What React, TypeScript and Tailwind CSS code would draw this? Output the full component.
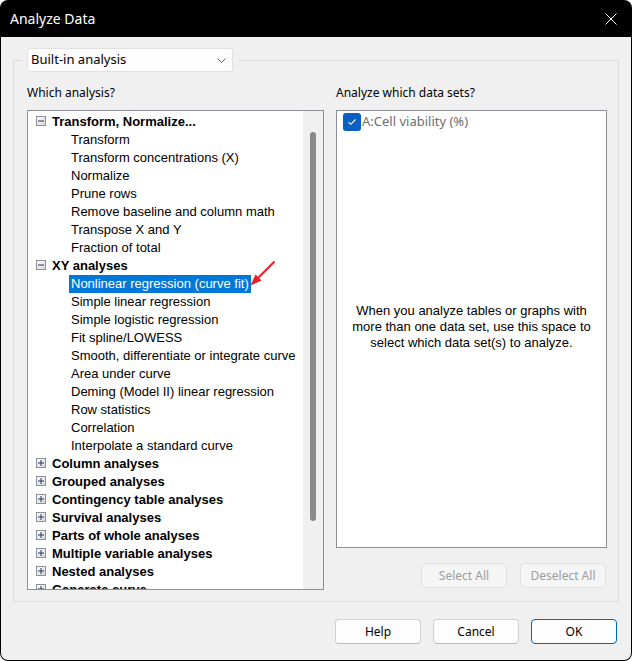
import React from "react";

type Cat = { label: string; open?: boolean; children?: string[] };

const tree: Cat[] = [
  {
    label: "Transform, Normalize...",
    open: true,
    children: [
      "Transform",
      "Transform concentrations (X)",
      "Normalize",
      "Prune rows",
      "Remove baseline and column math",
      "Transpose X and Y",
      "Fraction of total",
    ],
  },
  {
    label: "XY analyses",
    open: true,
    children: [
      "Nonlinear regression (curve fit)",
      "Simple linear regression",
      "Simple logistic regression",
      "Fit spline/LOWESS",
      "Smooth, differentiate or integrate curve",
      "Area under curve",
      "Deming (Model II) linear regression",
      "Row statistics",
      "Correlation",
      "Interpolate a standard curve",
    ],
  },
  { label: "Column analyses" },
  { label: "Grouped analyses" },
  { label: "Contingency table analyses" },
  { label: "Survival analyses" },
  { label: "Parts of whole analyses" },
  { label: "Multiple variable analyses" },
  { label: "Nested analyses" },
  { label: "Generate curve" },
];

function Toggle({ open }: { open?: boolean }) {
  return (
    <svg width="10" height="10" viewBox="0 0 10 10" className="shrink-0 mt-[3px]">
      <defs>
        <linearGradient id="tg" x1="0" y1="0" x2="1" y2="1">
          <stop offset="0" stopColor="#ffffff" />
          <stop offset="1" stopColor="#d6d6d6" />
        </linearGradient>
      </defs>
      <rect x="0.5" y="0.5" width="9" height="9" fill="url(#tg)" stroke="#8f8f8f" />
      <line x1="2" y1="5" x2="8" y2="5" stroke="#24376b" strokeWidth="1" />
      {!open && <line x1="5" y1="2" x2="5" y2="8" stroke="#24376b" strokeWidth="1" />}
    </svg>
  );
}

const tah = "font-['Liberation_Sans',Arial,sans-serif]";
const seg = "font-['Noto_Sans','Open_Sans',sans-serif]";

function Btn({ label, primary }: { label: string; primary?: boolean }) {
  return (
    <button
      className={`${seg} w-[86px] h-[25px] rounded-[4px] bg-[#fdfdfd] text-[12px] text-black border ${
        primary ? "border-[#0067c0]" : "border-[#d0d0d0] border-b-[#bcbcbc]"
      }`}
    >
      {label}
    </button>
  );
}

function DisBtn({ label }: { label: string }) {
  return (
    <button
      className={`${seg} w-[86px] h-[25px] rounded-[4px] bg-[#f5f5f5] text-[12px] text-[#9d9d9d] border border-[#e2e2e2]`}
    >
      {label}
    </button>
  );
}

export default function App() {
  return (
    <div className="w-[632px] h-[661px] bg-white">
      <div className="w-full h-full flex flex-col rounded-[8px] overflow-hidden bg-black">
        {/* Title bar */}
        <div className="h-[37px] shrink-0 flex items-center justify-between pl-[10px] pr-[15px]">
          <span className={`${seg} text-white text-[14px] leading-none`}>Analyze Data</span>
          <svg width="12" height="12" viewBox="0 0 12 12">
            <path d="M0.5 0.5 L11.5 11.5 M11.5 0.5 L0.5 11.5" stroke="#ffffff" strokeWidth="1" />
          </svg>
        </div>

        {/* Body */}
        <div className="flex-1 mx-px mb-px bg-[#f0f0f0] rounded-b-[7px] flex flex-col">
          <fieldset className="mt-[11px] ml-[12px] w-[606px] border border-[#dcdcdc] pb-[11px]">
            <legend className="ml-[8px] px-[5px]">
              <div className="w-[206px] h-[24px] bg-[#fdfdfd] border border-[#e1e1e1] rounded-[3px] flex items-center justify-between pl-[3px] pr-[6px]">
                <span className={`${seg} text-[13px] text-black`}>Built-in analysis</span>
                <svg width="9" height="5" viewBox="0 0 9 5">
                  <path d="M0.5 0.5 L4.5 4.5 L8.5 0.5" fill="none" stroke="#5f5f5f" strokeWidth="1" />
                </svg>
              </div>
            </legend>

            <div className="flex gap-[12px] pl-[13px] pt-[13px]">
              {/* Left column */}
              <div className="w-[297px] flex flex-col">
                <div className={`${seg} text-[12px] leading-[16px] text-black`}>Which analysis?</div>
                <div className="relative mt-[9px] h-[480px] bg-white border border-[#8e8f96] flex overflow-hidden">
                  <div className={`flex-1 pt-[2px] ${tah} text-[13px] leading-[18px] text-black`}>
                    {tree.map((c) => (
                      <div key={c.label}>
                        <div className="h-[18px] flex items-start pl-[8px] gap-[6px]">
                          <Toggle open={c.open} />
                          <span className="font-bold whitespace-nowrap">{c.label}</span>
                        </div>
                        {c.open &&
                          c.children!.map((ch, i) => {
                            const sel = c.label === "XY analyses" && i === 0;
                            return (
                              <div key={ch} className="h-[18px] flex pl-[41px]">
                                <span
                                  className={`whitespace-nowrap px-[2px] ${
                                    sel ? "bg-[#0078d7] text-white" : ""
                                  }`}
                                >
                                  {ch}
                                </span>
                              </div>
                            );
                          })}
                      </div>
                    ))}
                  </div>
                  {/* scrollbar */}
                  <div className="w-[20px] shrink-0 bg-[#f0f0f0] flex justify-center pt-[21px]">
                    <div className="w-[6px] h-[389px] rounded-[3px] bg-[#8a8a8a]" />
                  </div>
                  {/* red arrow annotation */}
                  <svg
                    className="absolute left-0 top-0 pointer-events-none"
                    width="297"
                    height="480"
                    viewBox="0 0 297 480"
                  >
                    <path d="M246 151 L230 167" stroke="#ea1c24" strokeWidth="2" strokeLinecap="round" />
                    <polygon points="222.5,174.5 233.5,169.5 227.5,163.5" fill="#ea1c24" />
                  </svg>
                </div>
              </div>

              {/* Right column */}
              <div className="w-[271px] flex flex-col">
                <div className={`${seg} text-[12px] leading-[16px] text-black`}>Analyze which data sets?</div>
                <div className="mt-[9px] h-[438px] bg-white border border-[#8e8f96] grid">
                  <div className="[grid-area:1/1] self-start flex items-center pl-[6px] pt-[1px]">
                    <div className="w-[18px] h-[18px] rounded-[3px] bg-[#0a5fc2] flex items-center justify-center">
                      <svg width="10" height="8" viewBox="0 0 10 8">
                        <path d="M1.5 4.2 L3.8 6.3 L8.5 1.5" fill="none" stroke="#ffffff" strokeWidth="1.1" />
                      </svg>
                    </div>
                    <span className={`${seg} text-[13px] text-[#6e6e6e] ml-[1px]`}>A:Cell viability (%)</span>
                  </div>
                  <div
                    className={`[grid-area:1/1] self-center text-center ${tah} text-[13px] leading-[16px] text-black pb-[4px]`}
                  >
                    When you analyze tables or graphs with
                    <br />
                    more than one data set, use this space to
                    <br />
                    select which data set(s) to analyze.
                  </div>
                </div>
                <div className="mt-[15px] flex justify-end gap-[13px] pr-px">
                  <DisBtn label="Select All" />
                  <DisBtn label="Deselect All" />
                </div>
              </div>
            </div>
          </fieldset>

          <div className="mt-[17px] flex justify-end gap-[12px] pr-[14px]">
            <Btn label="Help" />
            <Btn label="Cancel" />
            <Btn label="OK" primary />
          </div>
        </div>
      </div>
    </div>
  );
}
